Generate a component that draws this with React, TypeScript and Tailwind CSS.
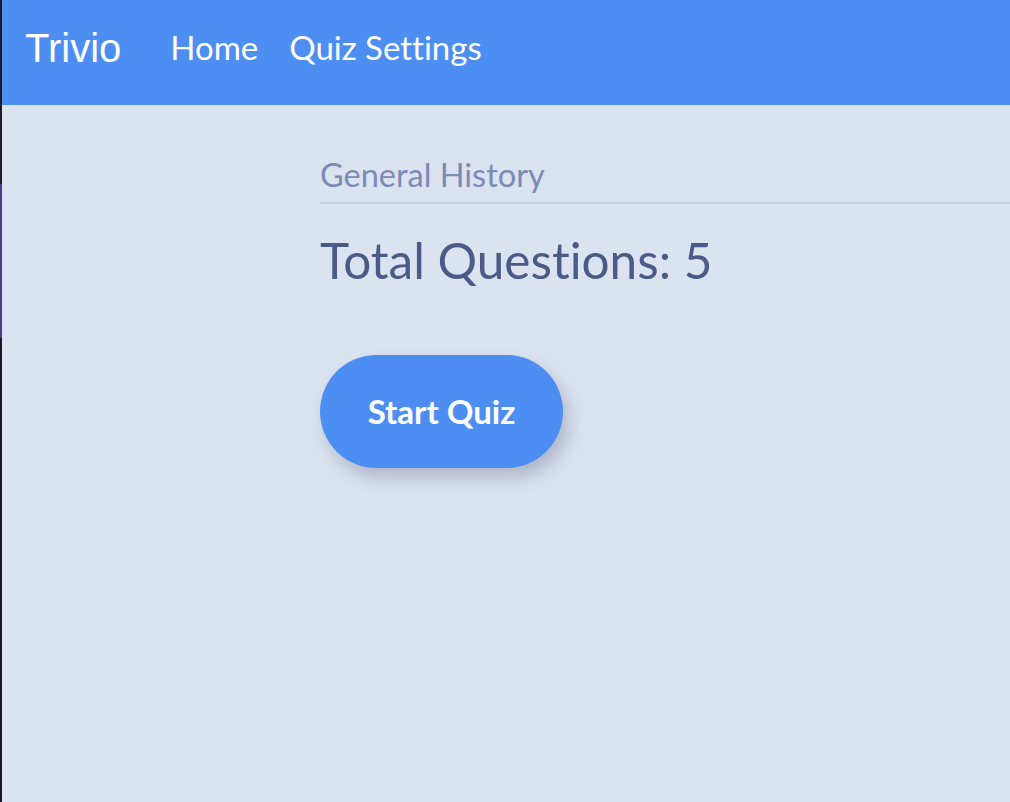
const nunito = { fontFamily: "Lato, 'Noto Sans', sans-serif" };

function NavBar() {
  return (
    <header className="flex h-[105px] items-center bg-[#4d8ef3] pb-[10px] text-white">
      <span className="ml-[23px] text-[40px] leading-none font-['Liberation_Sans',Arial,sans-serif]">
        Trivio
      </span>
      <nav
        className="ml-[49px] flex items-center gap-[31px] text-[33px] leading-none [font-variant-ligatures:none]"
        style={nunito}
      >
        <a href="#">Home</a>
        <a href="#">Quiz Settings</a>
      </nav>
    </header>
  );
}

export default function App() {
  return (
    <div className="flex min-h-[802px] w-full bg-[#dce3f0]">
      <div className="flex w-[2px] shrink-0 flex-col">
        <div className="h-[184px] bg-[#1c1c24]" />
        <div className="h-[154px] bg-[#4b3b8f]" />
        <div className="flex-1 bg-[#1a1a26]" />
      </div>
      <div className="flex min-w-0 flex-1 flex-col">
        <NavBar />
        <main className="pl-[318px] pt-[51px] [font-variant-ligatures:none]" style={nunito}>
          <h2 className="border-b-2 border-[#c9d6e8] pb-[8px] text-[32.5px] leading-[38px] text-[#7a8bb6]">
            General History
          </h2>
          <p className="mt-[28px] text-[49.5px] leading-[56px] text-[#4a5b88]">
            Total Questions: 5
          </p>
          <button
            type="button"
            className="mt-[67px] h-[113px] w-[243px] rounded-full bg-[#4d8ef3] text-[33px] font-bold text-white shadow-[6px_10px_18px_rgba(60,70,100,0.28)]"
          >
            Start Quiz
          </button>
        </main>
      </div>
    </div>
  );
}
